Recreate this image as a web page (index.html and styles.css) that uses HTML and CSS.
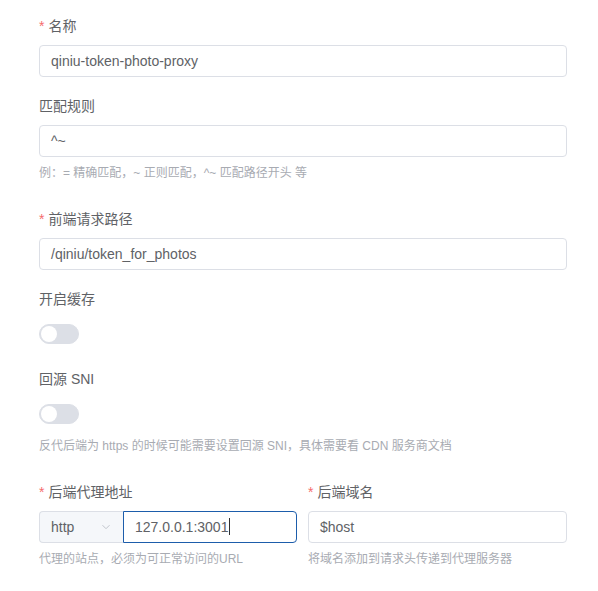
FILE: index.html
```html
<!DOCTYPE html>
<html lang="zh-CN">
<head>
<meta charset="utf-8">
<link rel="stylesheet" href="styles.css">
</head>
<body>
<form class="form">
  <div class="item">
    <label class="label"><span class="req">*</span>名称</label>
    <div class="input">qiniu-token-photo-proxy</div>
  </div>
  <div class="item">
    <label class="label">匹配规则</label>
    <div class="input">^~</div>
    <div class="help">例：= 精确匹配，~ 正则匹配，^~ 匹配路径开头 等</div>
  </div>
  <div class="item">
    <label class="label"><span class="req">*</span>前端请求路径</label>
    <div class="input">/qiniu/token_for_photos</div>
  </div>
  <div class="item">
    <label class="label">开启缓存</label>
    <div class="switch-row"><span class="switch"><span class="knob"></span></span></div>
  </div>
  <div class="item">
    <label class="label">回源 SNI</label>
    <div class="switch-row"><span class="switch"><span class="knob"></span></span></div>
    <div class="help">反代后端为 https 的时候可能需要设置回源 SNI，具体需要看 CDN 服务商文档</div>
  </div>
  <div class="row">
    <div class="item">
      <label class="label"><span class="req">*</span>后端代理地址</label>
      <div class="group">
        <div class="select">
          <span>http</span>
          <svg class="chev" width="10" height="10" viewBox="0 0 10 10"><path d="M1.5 3.2 L5 6.7 L8.5 3.2" fill="none" stroke="#c0c4cc" stroke-width="1"/></svg>
        </div>
        <div class="input focus">127.0.0.1:3001<span class="caret"></span></div>
      </div>
      <div class="help">代理的站点，必须为可正常访问的URL</div>
    </div>
    <div class="item">
      <label class="label"><span class="req">*</span>后端域名</label>
      <div class="input">$host</div>
      <div class="help">将域名添加到请求头传递到代理服务器</div>
    </div>
  </div>
</form>
</body>
</html>
```

FILE: styles.css
```css
html, body {
  margin: 0;
  padding: 0;
  background: #ffffff;
}
body {
  font-family: "Liberation Sans", "Noto Sans CJK SC", sans-serif;
  font-size: 14px;
  color: #606266;
}
.form {
  width: 528px;
  padding: 15px 0 0 39px;
}
.item {
  margin-bottom: 18px;
}
.label {
  display: block;
  height: 22px;
  line-height: 22px;
  margin-bottom: 8px;
  color: #606266;
}
.req {
  color: #f56c6c;
  margin-right: 4px;
}
.input {
  box-sizing: border-box;
  height: 32px;
  line-height: 30px;
  border: 1px solid #dcdfe6;
  border-radius: 4px;
  padding: 0 11px;
  color: #606266;
  background: #fff;
  white-space: nowrap;
  overflow: hidden;
}
.help {
  margin-top: 6px;
  padding-bottom: 7px;
  font-size: 12px;
  line-height: 20px;
  color: #a8abb2;
  white-space: nowrap;
}
.switch-row {
  height: 32px;
  display: flex;
  align-items: center;
}
.switch {
  box-sizing: border-box;
  width: 40px;
  height: 20px;
  border-radius: 10px;
  background: #dcdfe6;
  border: 1px solid #dcdfe6;
  position: relative;
}
.knob {
  position: absolute;
  left: 1px;
  top: 1px;
  width: 16px;
  height: 16px;
  border-radius: 50%;
  background: #fff;
}
.row {
  display: grid;
  grid-template-columns: 258px 259px;
  column-gap: 11px;
}
.group {
  display: flex;
  height: 32px;
}
.select {
  box-sizing: border-box;
  width: 84px;
  height: 32px;
  background: #f5f7fa;
  border: 1px solid #dcdfe6;
  border-right: none;
  border-radius: 4px 0 0 4px;
  padding: 0 12px 0 11px;
  display: flex;
  align-items: center;
  justify-content: space-between;
  color: #606266;
}
.group .input {
  flex: 1;
}
.input.focus {
  border-color: #1d5dab;
  border-radius: 0 4px 4px 0;
}
.caret {
  display: inline-block;
  width: 1px;
  height: 17px;
  background: #303133;
  vertical-align: -3px;
  margin-left: 1px;
}
```
